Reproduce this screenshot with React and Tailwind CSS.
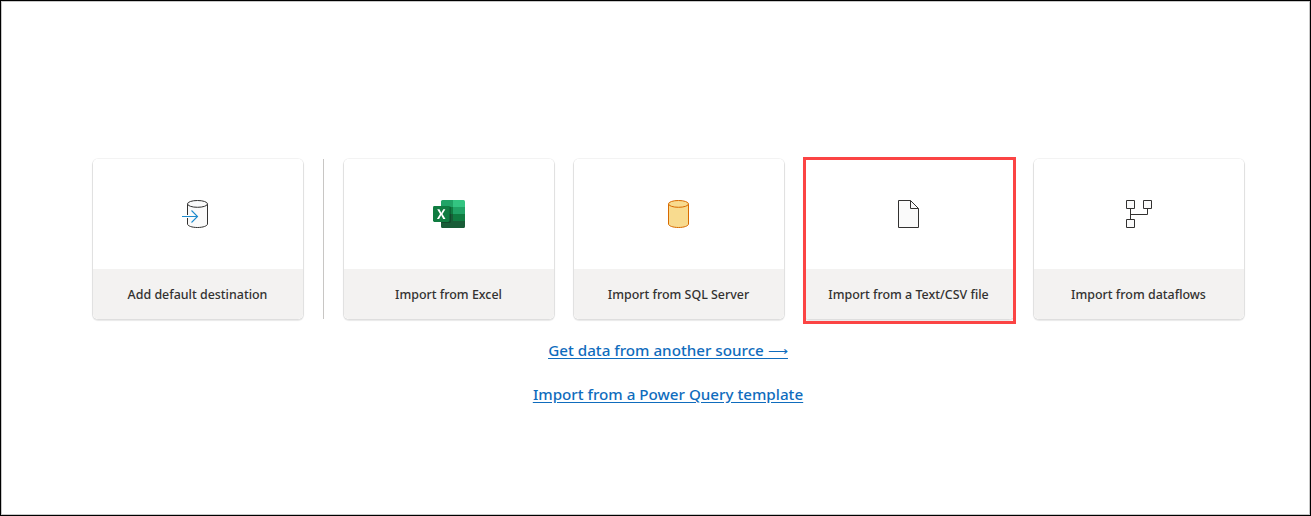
const INK = '#323130';

function Svg({ children }) {
  return (
    <svg width="32" height="32" viewBox="0 0 32 32" fill="none" aria-hidden="true">
      {children}
    </svg>
  );
}

function DestinationIcon() {
  return (
    <Svg>
      <path d="M5.5 5.9V26c0 1.9 4.5 3.5 10 3.5s10-1.6 10-3.5V5.9" fill="#fafafa" stroke={INK} />
      <ellipse cx="15.5" cy="5.9" rx="10" ry="3.4" fill="#fafafa" stroke={INK} />
      <path d="M4.5 17h2v3h-2z" fill="#fff" />
      <path d="M0 18.5h15.6M9.5 12.5l6 6-6 6" stroke="#1e8bcd" strokeWidth="1.1" />
    </Svg>
  );
}

function ExcelIcon() {
  return (
    <Svg>
      <path d="M9.5 2H20v7H8V3.5A1.5 1.5 0 0 1 9.5 2z" fill="#21a366" />
      <path d="M20 2h10.5a1.5 1.5 0 0 1 1.5 1.5V9H20z" fill="#33c481" />
      <path d="M8 9h12v7H8z" fill="#107c41" />
      <path d="M20 9h12v7H20z" fill="#21a366" />
      <path d="M20 16h12v7H20z" fill="#107c41" />
      <path d="M8 16h12v7h12v5.5a1.5 1.5 0 0 1-1.5 1.5h-21A1.5 1.5 0 0 1 8 28.5z" fill="#185c37" />
      <path d="M8 8h8.5a1.5 1.5 0 0 1 1.5 1.5v14a1.5 1.5 0 0 1-1.5 1.5H8z" fill="#000" opacity=".2" />
      <rect y="8" width="16.5" height="16" rx="1.4" fill="#107c41" />
      <path d="M3.9 21l3.1-4.9L4.2 11.2h2.3l1.5 3.1.3.6.3-.6 1.7-3.1h2.1l-2.9 4.8L12.5 21h-2.3l-1.8-3.4-.2-.5-.2.5L6.1 21z" fill="#fff" />
    </Svg>
  );
}

function DatabaseIcon() {
  return (
    <Svg>
      <path d="M5.5 5.9V26c0 1.9 4.5 3.5 10 3.5s10-1.6 10-3.5V5.9" fill="#f8db8f" stroke="#d86b00" />
      <ellipse cx="15.5" cy="5.9" rx="10" ry="3.4" fill="#f8db8f" stroke="#d86b00" />
    </Svg>
  );
}

function FileIcon() {
  return (
    <Svg>
      <path d="M5.5 2.5h12l8 8v19h-20z" fill="#fafafa" />
      <path d="M17.5 2.5h-12v27h20v-19h-8zl8 8" stroke={INK} />
    </Svg>
  );
}

function DataflowIcon() {
  return (
    <Svg>
      <path d="M3.5 2.5h8v8h-8zM20.5 2.5h8v8h-8zM3.5 21.5h8v8h-8z" fill="#fafafa" stroke={INK} />
      <path d="M7.5 10.5v11M7.5 16.5h17v-6" stroke={INK} />
    </Svg>
  );
}

function Card({ icon, label, highlighted }) {
  return (
    <button className="relative h-[160px] w-[210px] shrink-0 rounded-[5px] shadow-[0_0_0_1px_rgba(0,0,0,0.04),0_1px_1px_1px_rgba(0,0,0,0.09)]">
      <span className="flex h-full flex-col overflow-hidden rounded-[5px] bg-white">
        <span className="flex h-[110px] items-center justify-center">{icon}</span>
        <span className="flex flex-1 items-center justify-center bg-[#f3f2f1] pt-0.5 text-[12.45px] leading-5 font-medium whitespace-nowrap text-[#323130]">
          {label}
        </span>
      </span>
      {highlighted && <span className="absolute -top-[2px] -left-px h-[167px] w-[213px] border-3 border-[#fb4444]" />}
    </button>
  );
}

export default function App() {
  return (
    <main className="h-[516px] w-[1311px] border border-black bg-white font-['Noto_Sans','Open_Sans',sans-serif]">
      <div className="flex h-full flex-col items-center border border-[#c8c8c8] pt-[157px] pl-[25px]">
        <div className="flex gap-5">
          <Card icon={<DestinationIcon />} label="Add default destination" />
          <div className="h-[160px] w-px bg-[#c8c6c4]" />
          <Card icon={<ExcelIcon />} label="Import from Excel" />
          <Card icon={<DatabaseIcon />} label="Import from SQL Server" />
          <Card icon={<FileIcon />} label="Import from a Text/CSV file" highlighted />
          <Card icon={<DataflowIcon />} label="Import from dataflows" />
        </div>
        <nav className="mt-[19px] flex flex-col items-center gap-5 text-[15.2px] leading-6 font-medium whitespace-nowrap text-[#0f6cbd] underline underline-offset-[1.5px]">
          <a href="#source" className="h-6">
            Get data from another source <span className="text-[13.5px] leading-none">⟶</span>
          </a>
          <a href="#template" className="h-6">Import from a Power Query template</a>
        </nav>
      </div>
    </main>
  );
}
